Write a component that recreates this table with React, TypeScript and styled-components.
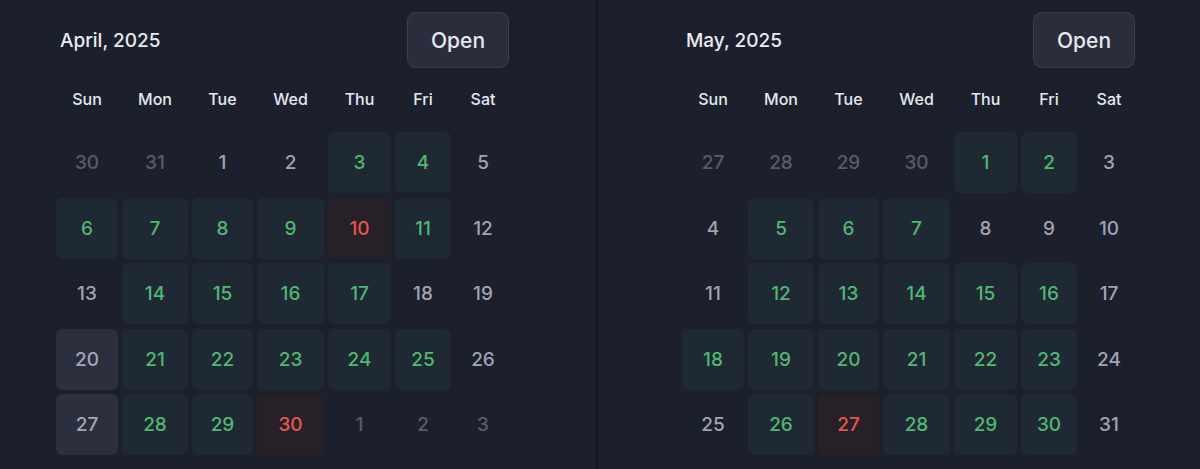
import React from "react";
import styled, { createGlobalStyle } from "styled-components";

const Global = createGlobalStyle`
  html, body { margin: 0; padding: 0; background: #1c202d; }
  body { font-family: Inter, "Noto Sans", sans-serif; }
`;

type Kind = "out" | "plain" | "green" | "red" | "gray";

const Page = styled.div`
  display: flex;
  width: 1200px;
  height: 469px;
  background: #1c202d;
  overflow: hidden;
`;

const Panel = styled.section<{ $padLeft: number; $width: number }>`
  box-sizing: border-box;
  width: ${(p) => p.$width}px;
  padding: 12px 0 0 ${(p) => p.$padLeft}px;
  display: flex;
  flex-direction: column;
`;

const Divider = styled.div`
  width: 2px;
  background: #11151e;
  flex-shrink: 0;
`;

const Header = styled.div`
  width: 455px;
  box-sizing: border-box;
  padding: 0 2px 0 4px;
  display: flex;
  align-items: center;
  justify-content: space-between;
  height: 56px;
`;

const Title = styled.h2`
  margin: 0;
  font-size: 19px;
  font-weight: 500;
  color: #e9ebf1;
`;

const OpenButton = styled.button`
  width: 102px;
  height: 56px;
  box-sizing: border-box;
  border-radius: 9px;
  border: 1px solid #3b4050;
  background: #2a2e3c;
  color: #e6e8ee;
  font-family: Inter, "Noto Sans", sans-serif;
  font-size: 21px;
  font-weight: 500;
  cursor: pointer;
`;

const Grid = styled.div`
  display: grid;
  grid-template-columns: 62px 66px 61px 67px 63px 56px 56px;
  column-gap: 4px;
`;

const WeekRow = styled(Grid)`
  margin-top: 22px;
  margin-bottom: 23px;
`;

const WeekDay = styled.div`
  text-align: center;
  font-size: 16px;
  line-height: 19px;
  font-weight: 500;
  color: #e6e8ee;
`;

const Days = styled(Grid)`
  grid-auto-rows: 61px;
  row-gap: 4.5px;
`;

const bg: Record<Kind, string> = {
  out: "transparent",
  plain: "transparent",
  green: "#1f2933",
  red: "#272029",
  gray: "#2b2f3e",
};
const fg: Record<Kind, string> = {
  out: "#575c6d",
  plain: "#a0a4b4",
  green: "#50b872",
  red: "#e5574c",
  gray: "#a3a7b6",
};

const Day = styled.div<{ $kind: Kind }>`
  display: flex;
  align-items: center;
  justify-content: center;
  border-radius: 6px;
  background: ${(p) => bg[p.$kind]};
  color: ${(p) => fg[p.$kind]};
  font-size: 19px;
  font-weight: 500;
`;

const WEEK = ["Sun", "Mon", "Tue", "Wed", "Thu", "Fri", "Sat"];

const code: Record<string, Kind> = {
  o: "out",
  p: "plain",
  g: "green",
  r: "red",
  s: "gray",
};

const april: [number, string][] = [
  [30, "o"], [31, "o"], [1, "p"], [2, "p"], [3, "g"], [4, "g"], [5, "p"],
  [6, "g"], [7, "g"], [8, "g"], [9, "g"], [10, "r"], [11, "g"], [12, "p"],
  [13, "p"], [14, "g"], [15, "g"], [16, "g"], [17, "g"], [18, "p"], [19, "p"],
  [20, "s"], [21, "g"], [22, "g"], [23, "g"], [24, "g"], [25, "g"], [26, "p"],
  [27, "s"], [28, "g"], [29, "g"], [30, "r"], [1, "o"], [2, "o"], [3, "o"],
];

const may: [number, string][] = [
  [27, "o"], [28, "o"], [29, "o"], [30, "o"], [1, "g"], [2, "g"], [3, "p"],
  [4, "p"], [5, "g"], [6, "g"], [7, "g"], [8, "p"], [9, "p"], [10, "p"],
  [11, "p"], [12, "g"], [13, "g"], [14, "g"], [15, "g"], [16, "g"], [17, "p"],
  [18, "g"], [19, "g"], [20, "g"], [21, "g"], [22, "g"], [23, "g"], [24, "p"],
  [25, "p"], [26, "g"], [27, "r"], [28, "g"], [29, "g"], [30, "g"], [31, "p"],
];

function Calendar({
  title,
  days,
  padLeft,
  width,
}: {
  title: string;
  days: [number, string][];
  padLeft: number;
  width: number;
}) {
  return (
    <Panel $padLeft={padLeft} $width={width}>
      <Header>
        <Title>{title}</Title>
        <OpenButton>Open</OpenButton>
      </Header>
      <WeekRow>
        {WEEK.map((w) => (
          <WeekDay key={w}>{w}</WeekDay>
        ))}
      </WeekRow>
      <Days>
        {days.map(([n, k], i) => (
          <Day key={i} $kind={code[k]}>
            {n}
          </Day>
        ))}
      </Days>
    </Panel>
  );
}

export default function App() {
  return (
    <>
      <Global />
      <Page>
        <Calendar title="April, 2025" days={april} padLeft={56} width={596} />
        <Divider />
        <Calendar title="May, 2025" days={may} padLeft={84} width={602} />
      </Page>
    </>
  );
}
